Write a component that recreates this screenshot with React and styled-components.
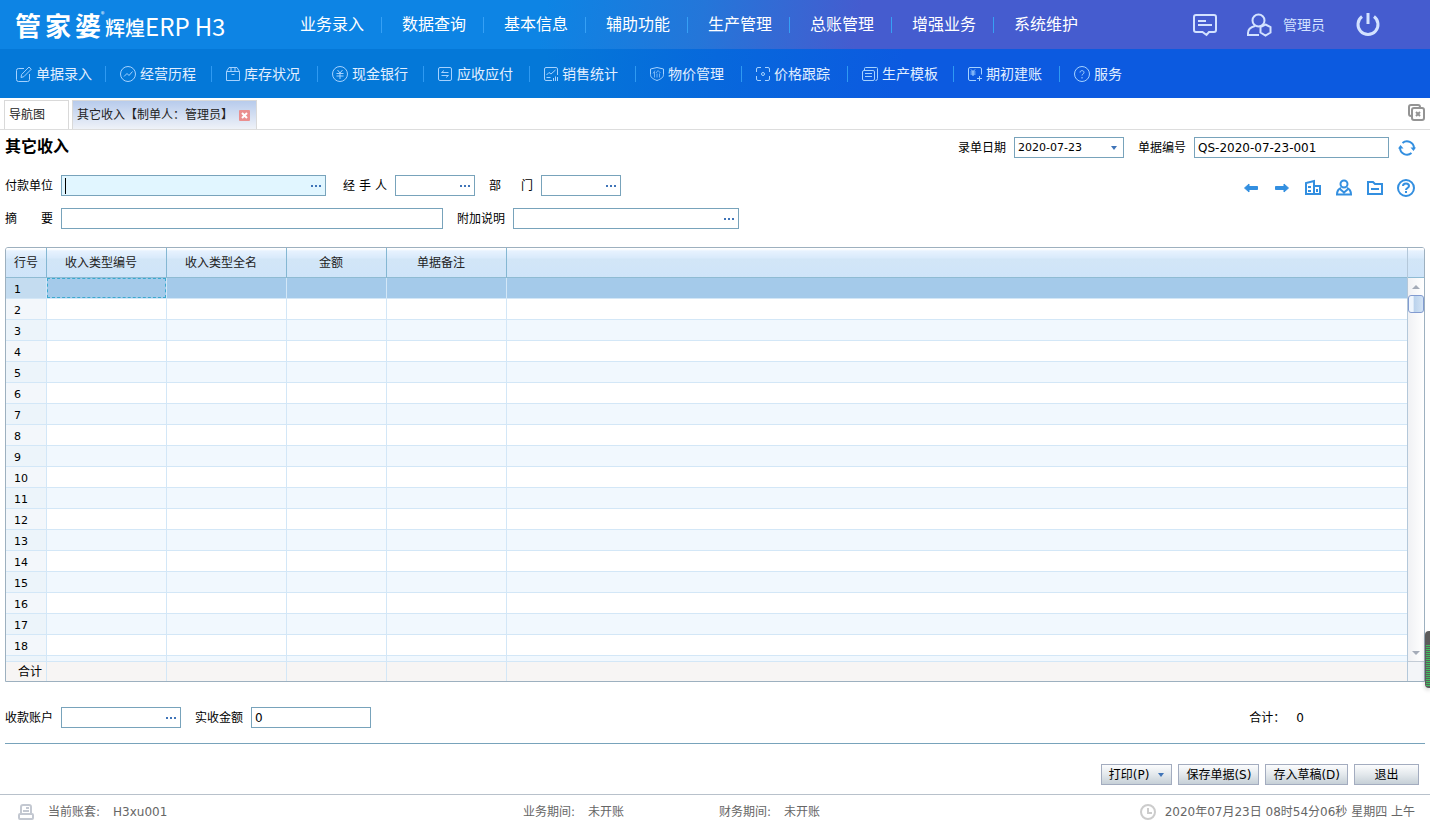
import styled, { createGlobalStyle } from "styled-components";

const GlobalStyle = createGlobalStyle`
  * {
    box-sizing: border-box;
  }
  body {
    margin: 0;
    background: #fff;
    color: #000;
    font: 12px/16px "DejaVu Sans", "Noto Sans CJK SC", sans-serif;
  }
  button, input, select {
    font: inherit;
    color: inherit;
    margin: 0;
  }
  svg {
    display: block;
    flex: none;
  }
`;

const Page = styled.div`
  display: flex;
  flex-direction: column;
  height: 100vh;
  min-height: 560px;
`;

const Header = styled.header`
  display: flex;
  align-items: center;
  height: 49px;
  padding: 0 50px 0 15px;
  color: #fff;
  background: linear-gradient(100deg, #0d84e4 38%, #2476d9 49%, #455ccf 60%);
`;

const Logo = styled.h1`
  display: flex;
  align-items: baseline;
  flex: 0 0 285px;
  margin: 0;
  padding-top: 3px;
  font: 24px/36px "Noto Sans CJK SC", sans-serif;
`;

const Brand = styled.span`
  display: flex;
  gap: 4px;
  font-size: 26px;
  font-weight: 700;
`;

const Mark = styled.sup`
  align-self: flex-start;
  width: 4px;
  font-size: 7px;
  line-height: 14px;
`;

const Series = styled.span`
  font-size: 20px;
  font-weight: 500;
`;

const Edition = styled.span`
  margin-left: 5px;
`;

const MainNav = styled.nav`
  display: flex;
  flex: 1;
  padding-bottom: 3px;
`;

const MainLink = styled.a`
  display: flex;
  align-items: center;
  color: #fff;
  font: 16px/24px "Noto Sans CJK SC", sans-serif;
  text-decoration: none;
  white-space: nowrap;

  & + &::before {
    content: "";
    width: 1px;
    height: 16px;
    margin: 3px 20px 0 17px;
    background: #36a0f5;
  }
`;

const UserArea = styled.div`
  display: flex;
  align-items: center;
  color: #d3e2ff;
`;

const HeaderButton = styled.button`
  display: flex;
  align-items: center;
  gap: 11px;
  margin-left: 30px;
  padding: 0;
  border: 0;
  background: none;
  color: inherit;
  font: 14px/20px "Noto Sans CJK SC", sans-serif;
`;

const UserName = styled.span`
  padding-bottom: 2px;
`;

const SubNav = styled.nav`
  display: flex;
  align-items: center;
  height: 49px;
  padding-left: 2px;
  background: linear-gradient(100deg, #0478d8 38%, #0768dc 50%, #0c5ae0 63%);
`;

const SubLink = styled.a`
  display: flex;
  align-items: center;
  gap: 4px;
  flex: 0 0 106px;
  height: 16px;
  padding-left: 14px;
  border-right: 1px solid #2f9af2;
  color: #e2efff;
  font: 14px/20px "Noto Sans CJK SC", sans-serif;
  text-decoration: none;
  white-space: nowrap;

  &:first-child {
    flex-basis: 104px;
  }
  &:last-child {
    border-right: 0;
  }
  svg {
    color: #a5d2ff;
  }
`;

const SubText = styled.span`
  padding-bottom: 2px;
`;

const TabBar = styled.div`
  display: flex;
  align-items: flex-end;
  gap: 3px;
  height: 32px;
  padding: 0 5px 0 4px;
  border-bottom: 1px solid #ddd;
`;

const Tab = styled.div`
  display: flex;
  align-items: center;
  gap: 6px;
  width: ${(props) => (props.$active ? "185px" : "65px")};
  height: 29px;
  padding: 0 4px;
  border: 1px solid #d9d9d9;
  border-bottom: 0;
  background: ${(props) =>
    props.$active ? "linear-gradient(#b7cbec, #eff2f8)" : "#fff"};
  color: #222;
`;

const TabButton = styled.button`
  padding: 0;
  border: 0;
  background: none;
  white-space: nowrap;
`;

const IconButton = styled.button`
  display: flex;
  align-items: center;
  justify-content: center;
  padding: 0;
  border: 0;
  background: none;
  color: #338fe0;
`;

const CloseAll = styled(IconButton)`
  align-self: center;
  margin: 0 0 3px auto;
  color: #949494;
`;

const RefreshButton = styled(IconButton)`
  margin-right: 9px;
`;

const Sheet = styled.main`
  display: flex;
  flex-direction: column;
  flex: 1;
  min-height: 0;
  padding: 7px 5px 9px;
`;

const Row = styled.div`
  display: flex;
  align-items: center;
  height: 21px;
  margin-top: ${(props) => props.$top || 0}px;
`;

const Title = styled.h2`
  flex: 1;
  margin: 0;
  padding-bottom: 5px;
  font: 700 16px/20px "Noto Sans CJK SC", sans-serif;
`;

const Label = styled.label`
  width: ${(props) => props.$width || 48}px;
  margin-right: 8px;
  text-align-last: justify;
  white-space: nowrap;
`;

const Field = styled.div`
  position: relative;
  display: flex;
  width: ${(props) => props.$width}px;
  height: 21px;
  margin-right: ${(props) => props.$gap || 14}px;
  border: 1px solid #78a3bb;
  background: ${(props) => (props.$active ? "#e1f6ff" : "#fff")};
`;

const Input = styled.input`
  flex: 1;
  min-width: 0;
  padding: 0 3px;
  border: 0;
  outline: 0;
  background: transparent;
`;

const Select = styled.select`
  flex: 1;
  padding: 0 3px;
  border: 0;
  outline: 0;
  appearance: none;
  background: transparent;
  font-size: 11px;
`;

const Caret = styled.span`
  position: absolute;
  top: 2px;
  left: 3px;
  width: 1px;
  height: 16px;
  background: #000;
`;

const Arrow = styled.span`
  align-self: center;
  margin-right: ${(props) => props.$right || 0}px;
  border: 3px solid transparent;
  border-top: 4px solid #3f74b8;
  border-bottom: 0;
`;

const More = styled.button`
  display: flex;
  align-items: center;
  gap: 2px;
  padding: 0 4px 0 2px;
  border: 0;
  background: none;

  i {
    width: 2px;
    height: 2px;
    background: #3f74b8;
  }
`;

const Tools = styled.div`
  display: flex;
  align-items: center;
  gap: 11px;
  margin: 4px 9px 0 auto;

  button {
    width: 20px;
    height: 20px;
  }
`;

const Grid = styled.div`
  display: flex;
  flex: 1;
  min-height: 0;
  margin-top: 18px;
  border: 1px solid #9db0bf;
  border-radius: 3px 3px 0 0;
  overflow: hidden;
`;

const GridView = styled.div`
  flex: 1;
  overflow: hidden;
`;

const Table = styled.table`
  width: 100%;
  border-spacing: 0;
  table-layout: fixed;
`;

const headFill =
  "linear-gradient(#fff 0, #fff 1px, #e7f2fe 3px, #d9eafb 10px, #d2e6f7 11px, #cfe4f9 100%)";

const HeadCell = styled.th`
  position: sticky;
  top: 0;
  height: 30px;
  padding: 0 ${(props) => (props.$first ? 0 : 11)}px 0 0;
  border-right: ${(props) => (props.$last ? 0 : 1)}px solid #84b7d3;
  border-bottom: 1px solid #8fbbd3;
  background: ${headFill};
  color: #222;
  font-weight: 400;
`;

const BodyRow = styled.tr`
  background: ${(props) =>
    props.$selected ? "#a4caea" : props.$odd ? "#f1f8fe" : "#fff"};
`;

const Cell = styled.td`
  height: 21px;
  padding: 0;
  border-right: ${(props) => (props.$last ? 0 : 1)}px solid #d3e7f7;
  border-bottom: 1px solid #d3e7f7;
`;

const CellFocus = styled.div`
  height: 20px;
  border: 1px dashed #3aa9cf;
`;

const NumCell = styled.th`
  padding: 4px 0 0 8px;
  border-right: 1px solid #d3e7f7;
  border-bottom: 1px solid #d3e7f7;
  background: ${(props) =>
    props.$selected ? "#c4dcf0" : props.$odd ? "#ecf4fa" : "#f3f7fb"};
  font-size: 11px;
  font-weight: 400;
  line-height: 16px;
  text-align: left;
  vertical-align: bottom;
`;

const FootCell = styled.td`
  position: sticky;
  bottom: 0;
  height: 20px;
  padding: 0 4px 0 0;
  border-top: 1px solid #d3e7f7;
  border-right: ${(props) => (props.$last ? 0 : 1)}px solid #d3e7f7;
  background: #f7f5f4;
  text-align: right;
`;

const ScrollColumn = styled.div`
  display: flex;
  flex-direction: column;
  width: 17px;
  border-left: 1px solid #b4c8da;
  background: linear-gradient(90deg, #f0f1f4, #fff);
`;

const ScrollHead = styled.div`
  height: 30px;
  border-bottom: 1px solid #8fbbd3;
  background: ${headFill};
`;

const ScrollButton = styled.button`
  display: flex;
  align-items: center;
  justify-content: center;
  height: 17px;
  padding: 0;
  border: 0;
  background: none;
  color: #a4abb8;
`;

const Thumb = styled.div`
  height: 18px;
  margin-bottom: auto;
  border: 1px solid #829bd0;
  border-radius: 3px;
  background: linear-gradient(90deg, #eef5fd 30%, #bad2ec 36%, #d2e3f5);
`;

const ScrollFoot = styled.div`
  height: 20px;
  border-top: 1px solid #c3ccd6;
  background: #f3f5f8;
`;

const Total = styled.div`
  display: flex;
  gap: 11px;
  margin: 0 121px 0 auto;
`;

const Divider = styled.hr`
  width: 100%;
  margin: 15px 0 20px;
  border: 0;
  border-top: 1px solid #78a3bb;
`;

const Actions = styled.div`
  display: flex;
  justify-content: flex-end;
  gap: 6px;
  padding-right: 6px;
`;

const ActionButton = styled.button`
  display: flex;
  align-items: center;
  justify-content: center;
  gap: 9px;
  height: 21px;
  min-width: 65px;
  padding: 0 7px;
  border: 1px solid #a3acbf;
  background: linear-gradient(#fbfcfd, #e3e8ec 50%, #c6d0d7);
  white-space: nowrap;
`;

const StatusBar = styled.footer`
  display: grid;
  grid-template-columns: 505px 196px 1fr auto;
  align-items: center;
  flex: none;
  height: 33px;
  padding: 2px 15px 0 18px;
  border-top: 1px solid #b8c1cb;
  color: #666;
`;

const StatusItem = styled.div`
  display: flex;
  align-items: center;
  gap: 13px;

  svg {
    margin-right: 1px;
  }
`;

const Clock = styled.time`
  display: flex;
  align-items: center;
  gap: 9px;
`;

const Meter = styled.div`
  position: fixed;
  right: 0;
  top: 631px;
  width: 5px;
  height: 57px;
  padding: 14px 0 2px 1px;
  border-radius: 4px 0 0 4px;
  background: #5c5c5c;
  box-shadow: 0 2px 4px rgba(0, 0, 0, 0.2);

  &::before {
    content: "";
    display: block;
    height: 100%;
    background: repeating-linear-gradient(#3fbf5f 0 1px, #5c5c5c 1px 2px);
  }
`;

const Svg = ({ w = 16, h = w, children, sw = 1 }) => (
  <svg
    width={w}
    height={h}
    viewBox={`0 0 ${w} ${h}`}
    fill="none"
    stroke="currentColor"
    strokeWidth={sw}
    aria-hidden="true"
  >
    {children}
  </svg>
);

const EditIcon = () => (
  <Svg>
    <path d="M8 2.500H2.500a2 2 0 0 0-2 2v9a2 2 0 0 0 2 2h9a2 2 0 0 0 2-2V8M5 11.500l.6-3L13 1l2.300 2.200-7.500 7.500z" />
  </Svg>
);
const TrendIcon = () => (
  <Svg>
    <circle cx="8" cy="8" r="7.500" />
    <path d="M4 10.500 7 7.500l2 2 3.500-4" />
  </Svg>
);
const BoxIcon = () => (
  <Svg w={14}>
    <path d="M.5 4.500 3 .5h8l2.500 4v9H.5zM.5 4.500h13M5 .5v4M9 .5v4M5.500 7.500h3" />
  </Svg>
);
const YenIcon = () => (
  <Svg>
    <circle cx="8" cy="8" r="7.500" />
    <path d="m5.500 4 2.500 3 2.500-3M4.500 7.500h7M4.500 10h7M8 7v6" />
  </Svg>
);
const SwapIcon = () => (
  <Svg w={15} h={14}>
    <rect x=".5" y=".5" width="13" height="13" rx="1.500" />
    <path d="M10.500 5.500H3.500L6 3.500M3.500 8.500h7l-2.500 2" />
  </Svg>
);
const ReportIcon = () => (
  <Svg w={14}>
    <path d="M8 13.500H2A1.500 1.500 0 0 1 .5 12V2A1.500 1.500 0 0 1 2 .5h10A1.500 1.500 0 0 1 13.500 2v6M2.500 8l2.500-2.500L7 7l4.500-4M2.500 10.500h4M9.500 11v3M11.500 9.500V14M13.500 10v4" />
  </Svg>
);
const ShieldIcon = () => (
  <Svg w={14}>
    <path d="M7 .5 13.500 2v5.500c0 3-2.500 4.500-6.500 6-4-1.500-6.500-3-6.500-6V2z" />
    <path
      d="M5 3.500 3 6.500M4.500 5v5.500M8 3.500 6 6M8 3.500 10.500 6M7 6.500v4M9.500 6.500v4"
      opacity=".7"
    />
  </Svg>
);
const ScanIcon = () => (
  <Svg w={14}>
    <path d="M5 .5H2A1.500 1.500 0 0 0 .5 2v3M9 .5h3A1.500 1.500 0 0 1 13.500 2v3M.5 9v3A1.500 1.500 0 0 0 2 13.500h3M13.500 9v3a1.500 1.500 0 0 1-1.500 1.500H9" />
    <circle cx="7" cy="7" r="1.500" />
  </Svg>
);
const TemplateIcon = () => (
  <Svg w={16} h={14}>
    <path d="M2.500 3V1.500a1 1 0 0 1 1-1h11a1 1 0 0 1 1 1v10a2 2 0 0 1-2 2M3 6.500h7M3 9.500h7" />
    <rect x=".5" y="3.500" width="12" height="10" rx="1.500" />
  </Svg>
);
const AccountIcon = () => (
  <Svg w={14}>
    <path d="M8 13.500H2A1.500 1.500 0 0 1 .5 12V2A1.500 1.500 0 0 1 2 .5h10A1.500 1.500 0 0 1 13.500 2v5.500M3 2.500l2 2 2-2M2.500 5h5M2.500 7h5M5 4.500V9M9 11.500h5M11.500 9v5" />
  </Svg>
);
const HelpIcon = () => (
  <Svg>
    <circle cx="8" cy="8" r="7.500" />
    <path d="M6 6.500C6 4 10 4 10 6.500 10 8 8 8 8 9.500M8 11v1.500" />
  </Svg>
);

const mainMenu = [
  "业务录入",
  "数据查询",
  "基本信息",
  "辅助功能",
  "生产管理",
  "总账管理",
  "增强业务",
  "系统维护",
];

const subMenu = [
  ["单据录入", EditIcon],
  ["经营历程", TrendIcon],
  ["库存状况", BoxIcon],
  ["现金银行", YenIcon],
  ["应收应付", SwapIcon],
  ["销售统计", ReportIcon],
  ["物价管理", ShieldIcon],
  ["价格跟踪", ScanIcon],
  ["生产模板", TemplateIcon],
  ["期初建账", AccountIcon],
  ["服务", HelpIcon],
];

const columns = ["收入类型编号", "收入类型全名", "金额", "单据备注", ""];
const numbered = 18;
// the rows after the numbered ones only carry the stripes on
const rows = Array.from({ length: 40 }, (_, i) => i + 1);

const LookupField = ({ id, label, labelWidth, width, gap, active }) => (
  <>
    <Label htmlFor={id} $width={labelWidth}>
      {label}
    </Label>
    <Field $width={width} $gap={gap} $active={active}>
      {active && <Caret />}
      <Input id={id} />
      <More type="button" aria-label={`选择${label}`}>
        <i />
        <i />
        <i />
      </More>
    </Field>
  </>
);

const TopHeader = () => (
  <Header>
    <Logo>
      <Brand>
        <span>管</span>
        <span>家</span>
        <span>婆</span>
      </Brand>
      <Mark>®</Mark>
      <Series>辉煌</Series>ERP<Edition>H3</Edition>
    </Logo>
    <MainNav>
      {mainMenu.map((item) => (
        <MainLink href="#" key={item}>
          {item}
        </MainLink>
      ))}
    </MainNav>
    <UserArea>
      <HeaderButton type="button" aria-label="消息">
        <Svg w={24} h={24} sw={2}>
          <path d="M3 2h18a2 2 0 0 1 2 2v13a2 2 0 0 1-2 2h-5l-2.500 3-4-3H3a2 2 0 0 1-2-2V4a2 2 0 0 1 2-2zM5 8h8M5 12h14" />
        </Svg>
      </HeaderButton>
      <HeaderButton type="button">
        <Svg w={25} h={24} sw={2}>
          <circle cx="11.500" cy="7.500" r="6" />
          <path d="M12 22H1v-2c0-4 3-6 7-7M18.500 11.500l5 2.500v5.500l-5 3-5-3V14z" />
        </Svg>
        <UserName>管理员</UserName>
      </HeaderButton>
      <HeaderButton type="button" aria-label="退出系统">
        <Svg w={25} h={25} sw={3}>
          <path d="M7 4.500a10 10 0 1 0 12 0M13 1v11" />
        </Svg>
      </HeaderButton>
    </UserArea>
  </Header>
);

const FormTools = () => (
  <Tools>
    <IconButton type="button" aria-label="上一张">
      <Svg w={16}>
        <path
          d="M1.500 8 6 4v2.500h8.500v3H6V12z"
          fill="currentColor"
          strokeLinejoin="round"
        />
      </Svg>
    </IconButton>
    <IconButton type="button" aria-label="下一张">
      <Svg w={16}>
        <path
          d="M14.500 8 10 4v2.500H1.500v3H10V12z"
          fill="currentColor"
          strokeLinejoin="round"
        />
      </Svg>
    </IconButton>
    <IconButton type="button" aria-label="单位">
      <Svg w={18} sw={2}>
        <path d="M2 15V4l8-2v13M10 7h6v8H1M4 8h3M4 12h3M13 10v3" />
      </Svg>
    </IconButton>
    <IconButton type="button" aria-label="职员">
      <Svg w={18} sw={2}>
        <circle cx="9" cy="5" r="3.500" />
        <path d="M6 9c-2.500 1-4 3-4 6.500h14C16 12 14.500 10 12 9M5.500 10.500 9 13.500l3.500-3" />
      </Svg>
    </IconButton>
    <IconButton type="button" aria-label="文件夹">
      <Svg w={18} sw={2}>
        <path d="M2 3h5l2 2h7v10H2zM5 10h8" />
      </Svg>
    </IconButton>
    <IconButton type="button" aria-label="帮助">
      <Svg w={20} sw={2}>
        <circle cx="10" cy="10" r="8" />
        <path d="M7 8c0-3.500 6-3.500 6 0 0 2-3 2-3 4M10 13v2" />
      </Svg>
    </IconButton>
  </Tools>
);

const EntryGrid = () => (
  <Grid>
    <GridView>
      <Table>
        <colgroup>
          <col width="41" />
          <col width="120" />
          <col width="120" />
          <col width="100" />
          <col width="120" />
          <col />
        </colgroup>
        <thead>
          <tr>
            <HeadCell $first>行号</HeadCell>
            {columns.map((name, i) => (
              <HeadCell key={i} $last={i === 4}>
                {name}
              </HeadCell>
            ))}
          </tr>
        </thead>
        <tbody>
          {rows.map((n) => (
            <BodyRow key={n} $selected={n === 1} $odd={n % 2 === 1}>
              <NumCell scope="row" $selected={n === 1} $odd={n % 2 === 1}>
                {n <= numbered && n}
              </NumCell>
              {columns.map((_, i) => (
                <Cell key={i} $last={i === 4}>
                  {n === 1 && i === 0 && <CellFocus />}
                </Cell>
              ))}
            </BodyRow>
          ))}
        </tbody>
        <tfoot>
          <tr>
            <FootCell>合计</FootCell>
            {columns.map((_, i) => (
              <FootCell key={i} $last={i === 4} />
            ))}
          </tr>
        </tfoot>
      </Table>
    </GridView>
    <ScrollColumn>
      <ScrollHead />
      <ScrollButton type="button" aria-label="向上滚动">
        <Svg w={8} h={4}>
          <path d="M0 4 4 0l4 4z" fill="currentColor" stroke="none" />
        </Svg>
      </ScrollButton>
      <Thumb />
      <ScrollButton type="button" aria-label="向下滚动">
        <Svg w={8} h={4}>
          <path d="m0 0 4 4 4-4z" fill="currentColor" stroke="none" />
        </Svg>
      </ScrollButton>
      <ScrollFoot />
    </ScrollColumn>
  </Grid>
);

const App = () => {
  return (
    <Page>
      <GlobalStyle />
      <TopHeader />
      <SubNav>
        {subMenu.map(([name, Icon]) => (
          <SubLink href="#" key={name}>
            <Icon />
            <SubText>{name}</SubText>
          </SubLink>
        ))}
      </SubNav>
      <TabBar>
        <Tab>
          <TabButton type="button">导航图</TabButton>
        </Tab>
        <Tab $active>
          <TabButton type="button">其它收入【制单人：管理员】</TabButton>
          <IconButton type="button" aria-label="关闭">
            <Svg w={11} sw={2}>
              <rect width="11" height="11" rx="1" fill="#ea8f8f" stroke="none" />
              <path d="m3 3 5 5M8 3 3 8" stroke="#fff" />
            </Svg>
          </IconButton>
        </Tab>
        <CloseAll type="button" aria-label="关闭全部">
          <Svg w={17} h={17} sw={2}>
            <path d="M3 12a2 2 0 0 1-2-2V3a2 2 0 0 1 2-2h7a2 2 0 0 1 2 2" />
            <rect x="4" y="4" width="12" height="12" rx="2" />
            <path d="m8 8 4 4M12 8l-4 4" />
          </Svg>
        </CloseAll>
      </TabBar>
      <Sheet>
        <Row>
          <Title>其它收入</Title>
          <Label htmlFor="date">录单日期</Label>
          <Field $width={110}>
            <Select id="date" defaultValue="2020-07-23">
              <option>2020-07-23</option>
            </Select>
            <Arrow $right={6} />
          </Field>
          <Label htmlFor="number">单据编号</Label>
          <Field $width={195} $gap={9}>
            <Input id="number" defaultValue="QS-2020-07-23-001" />
          </Field>
          <RefreshButton type="button" aria-label="刷新">
            <Svg w={18} sw={2}>
              <path d="M4.500 4A7 7 0 0 1 16 9M13.500 14A7 7 0 0 1 2 9" />
              <path
                d="M12.500 8.500H18L15.500 12zM0 9.500h5.500L2.500 6z"
                fill="currentColor"
                stroke="none"
              />
            </Svg>
          </RefreshButton>
        </Row>
        <Row $top={17}>
          <LookupField id="payer" label="付款单位" width={265} gap={17} active />
          <LookupField
            id="handler"
            label="经 手 人"
            labelWidth={44}
            width={80}
          />
          <LookupField id="dept" label="部 门" labelWidth={44} width={80} />
          <FormTools />
        </Row>
        <Row $top={12}>
          <Label htmlFor="summary">摘 要</Label>
          <Field $width={382}>
            <Input id="summary" />
          </Field>
          <LookupField id="note" label="附加说明" width={226} />
        </Row>
        <EntryGrid />
        <Row $top={25}>
          <LookupField id="account" label="收款账户" width={120} />
          <Label htmlFor="amount">实收金额</Label>
          <Field $width={120}>
            <Input id="amount" defaultValue="0" />
          </Field>
          <Total>
            <span>合计：</span>
            <span>0</span>
          </Total>
        </Row>
        <Divider />
        <Actions>
          <ActionButton type="button">
            打印(P)
            <Arrow />
          </ActionButton>
          <ActionButton type="button">保存单据(S)</ActionButton>
          <ActionButton type="button">存入草稿(D)</ActionButton>
          <ActionButton type="button">退出</ActionButton>
        </Actions>
      </Sheet>
      <StatusBar>
        <StatusItem>
          <Svg w={16} sw={2}>
            <g stroke="#c3c8d1">
              <path d="M3 10V3a2 2 0 0 1 2-2h6a2 2 0 0 1 2 2v7M8 4h3M5 7h6" />
              <rect x="1" y="10" width="14" height="5" rx="1" />
            </g>
          </Svg>
          <span>当前账套:</span>
          <span>H3xu001</span>
        </StatusItem>
        <StatusItem>
          <span>业务期间:</span>
          <span>未开账</span>
        </StatusItem>
        <StatusItem>
          <span>财务期间:</span>
          <span>未开账</span>
        </StatusItem>
        <Clock dateTime="2020-07-23T08:54:06">
          <Svg w={16} sw={2}>
            <g stroke="#ccc">
              <circle cx="8" cy="8" r="7" />
              <path d="M8 4v5h4" />
            </g>
          </Svg>
          2020年07月23日 08时54分06秒 星期四 上午
        </Clock>
      </StatusBar>
      <Meter />
    </Page>
  );
};

export default App;
